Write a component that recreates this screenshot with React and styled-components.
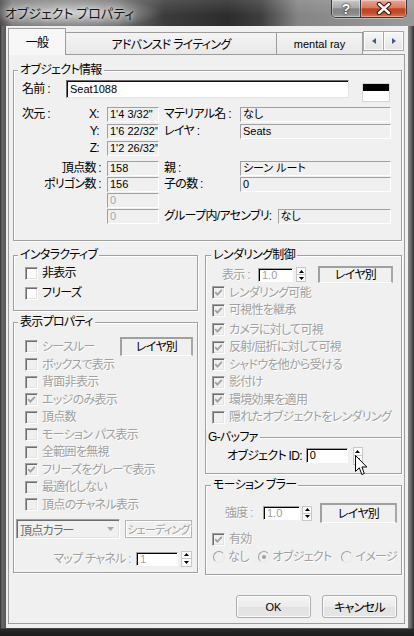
import React from 'react'
import styled, { createGlobalStyle, css } from 'styled-components'

const UI_FONT = `"Liberation Sans", "Noto Sans CJK JP", sans-serif`

const GlobalStyle = createGlobalStyle`
  html, body {
    margin: 0;
    padding: 0;
    background: #1e1e1e;
  }
  body {
    font-family: ${UI_FONT};
    font-size: 12px;
    font-feature-settings: "palt";
    letter-spacing: -0.7px;
    color: #000;
  }
  * { box-sizing: border-box; }
`

const Window = styled.div`
  position: relative;
  width: 414px;
  height: 636px;
  display: flex;
  flex-direction: column;
  overflow: hidden;
  background:
    linear-gradient(to top, #1b1b1b 0, #2a2a2a 7px, transparent 8px),
    linear-gradient(90deg, #2c2c2c 0, #6b6b6b 2px, #5a5a5a 5px, #6a6a6a 50%, #8a8a8a calc(100% - 6px), #6a6a6a calc(100% - 3px), #2a2a2a 100%);
`

const TitleBar = styled.div`
  flex: none;
  height: 26px;
  display: flex;
  align-items: flex-start;
  background:
    radial-gradient(ellipse 90px 16px at 72px 13px, rgba(235, 235, 235, 0.75), rgba(235, 235, 235, 0) 100%),
    linear-gradient(rgba(255, 255, 255, 0.12), rgba(255, 255, 255, 0) 60%),
    linear-gradient(90deg, #4a4a4a 0, #7d7d7d 3%, #727272 28%, #3b3b3b 40%, #2c2c2c 55%, #3e3e3e 63%, #858585 72%, #9a9a9a 100%);
`

const Title = styled.div`
  padding-left: 5px;
  line-height: 26px;
  font-family: "Noto Sans CJK JP", sans-serif;
  font-size: 13px;
  letter-spacing: 0;
  color: #151515;
  white-space: nowrap;
  text-shadow: 0 0 4px rgba(255, 255, 255, 0.9), 0 0 9px rgba(255, 255, 255, 0.6);
`

const Captions = styled.div`
  margin-left: auto;
  margin-right: 7px;
  display: flex;
  height: 18px;
  border: 1px solid #383838;
  border-top: none;
  border-radius: 0 0 5px 5px;
  overflow: hidden;
  box-shadow: 0 1px 0 rgba(255, 255, 255, 0.35);
`

const CaptionButton = styled.div`
  height: 17px;
  display: flex;
  align-items: center;
  justify-content: center;
  box-shadow: inset 0 0 0 1px rgba(255, 255, 255, 0.35);
  ${p => p.$close ? css`
    width: 45px;
    background: linear-gradient(#e8a898 0%, #d77a66 45%, #c5411f 52%, #c24a2b 75%, #dc7a52 100%);
  ` : css`
    width: 29px;
    border-right: 1px solid #383838;
    background: linear-gradient(#c9c9c9 0%, #a9a9a9 45%, #858585 52%, #8a8a8a 80%, #a6a6a6 100%);
    font-family: "Liberation Sans", sans-serif;
    font-weight: bold;
    font-size: 14px;
    letter-spacing: 0;
    color: #fff;
    text-shadow: 0 0 2px #222, 0 0 1px #222;
  `}
`

const Frame = styled.div`
  flex: 1;
  min-height: 0;
  display: flex;
  padding: 0 6px 8px 6px;
`

const Client = styled.div`
  flex: 1;
  display: flex;
  flex-direction: column;
  background: #f0f0f0;
  padding: 2px 3px 4px 2px;
`

const TabStrip = styled.div`
  flex: none;
  height: 26px;
  display: flex;
  align-items: flex-end;
`

const Tab = styled.div`
  flex: none;
  width: ${p => p.$w}px;
  display: flex;
  align-items: center;
  justify-content: center;
  white-space: nowrap;
  overflow: hidden;
  border: 1px solid #9c9c9c;
  border-bottom: none;
  ${p => p.$active ? css`
    position: relative;
    z-index: 1;
    height: 27px;
    margin-bottom: -1px;
    padding-bottom: 1px;
    background: #f7f7f7;
  ` : css`
    height: 22px;
    border-left: none;
    background: linear-gradient(#f4f4f4, #e8e8e8);
  `}
`

const Latin = styled.span`
  font-family: "Liberation Sans", sans-serif;
  font-size: 11px;
  letter-spacing: 0;
`

const TabScroll = styled.div`
  align-self: flex-start;
  margin-top: 3px;
  display: flex;
`

const ScrollButton = styled.div`
  width: 21px;
  height: 20px;
  display: flex;
  align-items: center;
  justify-content: center;
  border: 1px solid #a8a8a8;
  margin-left: ${p => p.$first ? 0 : -1}px;
  background: linear-gradient(#f7f7f7, #e4e4e4);
  box-shadow: inset 0 0 0 1px #fcfcfc;
`

const Panel = styled.div`
  flex: 1;
  display: flex;
  flex-direction: column;
  border: 1px solid #9c9c9c;
  background: #f0f0f0;
  padding: 15px 2px 0 4px;
`

const Group = styled.div`
  flex: none;
  display: flex;
  flex-direction: column;
  margin-top: ${p => p.$mt || 0}px;
  border: 1px solid #a0a0a0;
  box-shadow: inset 1px 1px 0 #fff, 1px 1px 0 #fff;
`

const Legend = styled.div`
  align-self: flex-start;
  height: 14px;
  margin: -8px 0 0 ${p => p.$ml}px;
  padding: 0 2px;
  background: #f0f0f0;
  line-height: 14px;
  white-space: nowrap;
`

const GroupBody = styled.div`
  display: flex;
  flex-direction: column;
  padding: ${p => p.$pad};
`

const NameRow = styled.div`
  display: flex;
  align-items: flex-start;
  height: 22px;
`

const NameLabel = styled.div`
  width: 44px;
  line-height: 18px;
  white-space: nowrap;
`

const NameInput = styled.div`
  width: 283px;
  height: 18px;
  background: #fff;
  border: 1px solid;
  border-color: #6a6a6a #e3e3e3 #e3e3e3 #6a6a6a;
  box-shadow: inset 1px 1px 0 #101010;
  padding-left: 3px;
  font-size: 11px;
  letter-spacing: 0;
  line-height: 16px;
`

const Swatch = styled.div`
  width: 28px;
  height: 19px;
  margin: 3px 0 0 13px;
  border: 1px solid #d6d6d6;
  background: linear-gradient(#000 0, #000 7px, #fff 7px);
`

const InfoRows = styled.div`
  display: flex;
  flex-direction: column;
  gap: ${p => p.$gap}px;
  margin-top: 5px;
`

const InfoRow = styled.div`
  display: grid;
  grid-template-columns: 85px 52px 81px 151px;
  height: 15px;
  align-items: center;
`

const RowLabel = styled.div`
  display: flex;
  justify-content: ${p => p.$split ? 'space-between' : 'flex-end'};
  padding-right: ${p => p.$pr}px;
  line-height: 15px;
  white-space: nowrap;
`

const SideLabel = styled.div`
  flex: none;
  padding-left: 5px;
  padding-right: ${p => p.$pr || 0}px;
  line-height: 15px;
  white-space: nowrap;
`

const Wide = styled.div`
  grid-column: 3 / 5;
  display: flex;
  align-items: center;
`

const ReadField = styled.div`
  flex: 1;
  height: 15px;
  background: #f0f0f0;
  border: 1px solid;
  border-color: #a0a0a0 #fff #fff #a0a0a0;
  padding-left: 2px;
  font-size: 11px;
  letter-spacing: 0;
  line-height: 13px;
  white-space: nowrap;
  overflow: hidden;
  color: ${p => p.$dim ? '#a8a8a8' : '#000'};
`

const Columns = styled.div`
  display: flex;
  gap: 7px;
  margin-top: 14px;
  align-items: flex-start;
`

const Column = styled.div`
  flex: none;
  width: ${p => p.$w}px;
  display: flex;
  flex-direction: column;
`

const Text = styled.span`
  white-space: nowrap;
  line-height: 14px;
  color: ${p => p.$off ? '#a0a0a0' : '#000'};
  text-shadow: ${p => p.$off ? '1px 1px 0 #fff' : 'none'};
`

const Row = styled.div`
  display: flex;
  align-items: center;
  height: ${p => p.$h}px;
  margin-top: ${p => p.$mt || 0}px;
  padding-left: ${p => p.$pl || 0}px;
  padding-right: ${p => p.$pr || 0}px;
  justify-content: ${p => p.$end ? 'flex-end' : 'flex-start'};
`

const CheckBox = styled.div`
  flex: none;
  width: 13px;
  height: 13px;
  margin-right: 4px;
  display: flex;
  align-items: center;
  justify-content: center;
  border: 1px solid;
  border-color: #a0a0a0 #fff #fff #a0a0a0;
  box-shadow: inset 1px 1px 0 #6d6d6d, inset -1px -1px 0 #e3e3e3;
  background: ${p => p.$off ? '#f0f0f0' : '#fff'};
`

const RadioDot = styled.div`
  flex: none;
  width: 12px;
  height: 12px;
  margin-right: 3px;
  border-radius: 50%;
  border: 1px solid #a0a0a0;
  border-right-color: #e8e8e8;
  border-bottom-color: #e8e8e8;
  background: #f0f0f0;
  display: flex;
  align-items: center;
  justify-content: center;
  &::after {
    content: '';
    width: 4px;
    height: 4px;
    border-radius: 50%;
    background: ${p => p.$on ? '#a0a0a0' : 'transparent'};
  }
`

const RadioOption = styled.div`
  flex: none;
  margin-right: 9px;
  display: flex;
  align-items: center;
`

const FieldLabel = styled.div`
  flex: none;
  width: ${p => p.$w ? `${p.$w}px` : 'auto'};
  margin-right: ${p => p.$mr || 0}px;
  white-space: nowrap;
  line-height: 14px;
  color: ${p => p.$off ? '#a0a0a0' : '#000'};
  text-shadow: ${p => p.$off ? '1px 1px 0 #fff' : 'none'};
`

const EditBox = styled.div`
  flex: none;
  width: ${p => p.$w}px;
  height: ${p => p.$h || 15}px;
  background: #fff;
  border: 1px solid;
  border-color: #a0a0a0 #fff #fff #a0a0a0;
  box-shadow: inset 1px 1px 0 #000;
  padding-left: 3px;
  font-size: 11px;
  letter-spacing: 0;
  line-height: ${p => (p.$h || 15) - 2}px;
  color: ${p => p.$off ? '#a0a0a0' : '#000'};
`

const SpinBox = styled.div`
  flex: none;
  width: ${p => p.$w || 10}px;
  height: ${p => p.$h || 15}px;
  margin-left: ${p => p.$ml || 2}px;
  display: flex;
  flex-direction: column;
  background: #fbfbfb;
  border: 1px solid #c8c8c8;
`

const SpinHalf = styled.div`
  flex: 1;
  display: flex;
  align-items: center;
  justify-content: center;
  & + & { border-top: 1px solid #c8c8c8; }
`

const LayerButton = styled.div`
  flex: none;
  width: ${p => p.$w}px;
  height: ${p => p.$h}px;
  margin-left: auto;
  margin-right: ${p => p.$mr || 0}px;
  display: flex;
  align-items: center;
  justify-content: center;
  background: #f0f0f0;
  border-style: solid;
  border-width: 2px 2px 1px 2px;
  border-color: #a0a0a0 #a8a8a8 #fff #a0a0a0;
  white-space: nowrap;
  line-height: 14px;
`

const Combo = styled.div`
  flex: none;
  width: 104px;
  height: 20px;
  margin-left: 2px;
  display: flex;
  align-items: center;
  justify-content: space-between;
  padding: 0 5px 0 3px;
  background: #f0f0f0;
  border: 1px solid;
  border-color: #a0a0a0 #fff #fff #a0a0a0;
  box-shadow: inset 1px 1px 0 #6d6d6d, inset -1px -1px 0 #e3e3e3;
  color: #6d6d6d;
  font-size: 12px;
`

const FlatButton = styled.div`
  flex: none;
  width: 67px;
  height: 18px;
  margin-left: 5px;
  display: flex;
  align-items: center;
  justify-content: center;
  border: 1px solid #b4b4b4;
  box-shadow: inset 1px 1px 0 #fff, inset -1px -1px 0 #fff;
  font-size: 11px;
  color: #a0a0a0;
  text-shadow: 1px 1px 0 #fff;
  white-space: nowrap;
  letter-spacing: -0.8px;
`

const Footer = styled.div`
  display: flex;
  justify-content: flex-end;
  gap: 11px;
  margin-top: 20px;
  padding-right: 5px;
`

const DialogButton = styled.div`
  width: 75px;
  height: 23px;
  display: flex;
  align-items: center;
  justify-content: center;
  border: 1px solid #acacac;
  border-radius: 3px;
  background: linear-gradient(#f4f4f4, #ececec 50%, #e2e2e2 51%, #e6e6e6);
  box-shadow: inset 0 0 0 1px #fbfbfb;
`

const Cursor = styled.svg`
  position: absolute;
  left: 355px;
  top: 455px;
  pointer-events: none;
`

function Check ({ checked, off, children, h = 17.5, mt, pl }) {
  return (
    <Row $h={h} $mt={mt} $pl={pl}>
      <CheckBox $off={off}>
        {checked && (
          <svg width="9" height="9" viewBox="0 0 9 9">
            <path d="M1.2 4.2 L3.4 6.6 L7.8 1.8" fill="none" stroke={off ? '#a0a0a0' : '#000'} strokeWidth="1.8" />
          </svg>
        )}
      </CheckBox>
      <Text $off={off}>{children}</Text>
    </Row>
  )
}

function Spinner ({ w, h, ml }) {
  return (
    <SpinBox $w={w} $h={h} $ml={ml}>
      <SpinHalf>
        <svg width="5" height="3" viewBox="0 0 5 3"><path d="M0 3 L2.5 0 L5 3 Z" fill="#000" /></svg>
      </SpinHalf>
      <SpinHalf>
        <svg width="5" height="3" viewBox="0 0 5 3"><path d="M0 0 L2.5 3 L5 0 Z" fill="#000" /></svg>
      </SpinHalf>
    </SpinBox>
  )
}

const displayItems = [
  ['ボックスで表示', false],
  ['背面非表示', false],
  ['エッジのみ表示', true],
  ['頂点数', false],
  ['モーション パス表示', false],
  ['全範囲を無視', false],
  ['フリーズをグレーで表示', true],
  ['最適化しない', false],
  ['頂点のチャネル表示', false]
]

const renderItemsA = [
  ['レンダリング可能', true],
  ['可視性を継承', true]
]

const renderItemsB = [
  ['カメラに対して可視', true],
  ['反射/屈折に対して可視', true],
  ['シャドウを他から受ける', true],
  ['影付け', true],
  ['環境効果を適用', true],
  ['隠れたオブジェクトをレンダリング', false]
]

export default function App () {
  return (
    <>
      <GlobalStyle />
      <Window>
        <TitleBar>
          <Title>オブジェクト プロパティ</Title>
          <Captions>
            <CaptionButton>?</CaptionButton>
            <CaptionButton $close>
              <svg width="16" height="13" viewBox="0 0 16 13">
                <path d="M3 2 L13 11 M13 2 L3 11" stroke="#3b1408" strokeWidth="4.4" strokeLinecap="round" />
                <path d="M3 2 L13 11 M13 2 L3 11" stroke="#fff" strokeWidth="2.4" strokeLinecap="round" />
              </svg>
            </CaptionButton>
          </Captions>
        </TitleBar>

        <Frame>
          <Client>
            <TabStrip>
              <Tab $active $w={58}>一般</Tab>
              <Tab $w={211}>アドバンスド ライティング</Tab>
              <Tab $w={86}><Latin>mental ray</Latin></Tab>
              <TabScroll>
                <ScrollButton $first>
                  <svg width="4" height="6" viewBox="0 0 4 6"><path d="M4 0 L0 3 L4 6 Z" fill="#3d5b8c" /></svg>
                </ScrollButton>
                <ScrollButton>
                  <svg width="4" height="6" viewBox="0 0 4 6"><path d="M0 0 L4 3 L0 6 Z" fill="#3d5b8c" /></svg>
                </ScrollButton>
              </TabScroll>
            </TabStrip>

            <Panel>
              <Group>
                <Legend $ml={4}>オブジェクト情報</Legend>
                <GroupBody $pad="3px 0 16px 8px">
                  <NameRow>
                    <NameLabel>名前 :</NameLabel>
                    <NameInput>Seat1088</NameInput>
                    <Swatch />
                  </NameRow>

                  <InfoRows $gap={2}>
                    <InfoRow>
                      <RowLabel $split $pr={8}><span>次元 :</span><span>X:</span></RowLabel>
                      <ReadField>1'4 3/32"</ReadField>
                      <SideLabel>マテリアル名 :</SideLabel>
                      <ReadField>なし</ReadField>
                    </InfoRow>
                    <InfoRow>
                      <RowLabel $pr={8}>Y:</RowLabel>
                      <ReadField>1'6 22/32"</ReadField>
                      <SideLabel>レイヤ :</SideLabel>
                      <ReadField>Seats</ReadField>
                    </InfoRow>
                    <InfoRow>
                      <RowLabel $pr={8}>Z:</RowLabel>
                      <ReadField>1'2 26/32"</ReadField>
                    </InfoRow>
                  </InfoRows>

                  <InfoRows $gap={1}>
                    <InfoRow>
                      <RowLabel $pr={6}>頂点数 :</RowLabel>
                      <ReadField>158</ReadField>
                      <SideLabel>親 :</SideLabel>
                      <ReadField>シーン ルート</ReadField>
                    </InfoRow>
                    <InfoRow>
                      <RowLabel $pr={6}>ポリゴン数 :</RowLabel>
                      <ReadField>156</ReadField>
                      <SideLabel>子の数 :</SideLabel>
                      <ReadField>0</ReadField>
                    </InfoRow>
                    <InfoRow>
                      <RowLabel $pr={6} />
                      <ReadField $dim>0</ReadField>
                    </InfoRow>
                    <InfoRow>
                      <RowLabel $pr={6} />
                      <ReadField $dim>0</ReadField>
                      <Wide>
                        <SideLabel $pr={6}>グループ内/アセンブリ:</SideLabel>
                        <ReadField>なし</ReadField>
                      </Wide>
                    </InfoRow>
                  </InfoRows>
                </GroupBody>
              </Group>

              <Columns>
                <Column $w={185}>
                  <Group>
                    <Legend $ml={4}>インタラクティブ</Legend>
                    <GroupBody $pad="2px 0 8px 11px">
                      <Check h={18}>非表示</Check>
                      <Check h={18} mt={2}>フリーズ</Check>
                    </GroupBody>
                  </Group>

                  <Group $mt={11}>
                    <Legend $ml={4}>表示プロパティ</Legend>
                    <GroupBody $pad="8px 0 5px 0">
                      <Row $h={19} $pl={11}>
                        <CheckBox $off />
                        <Text $off>シースルー</Text>
                        <LayerButton $w={73} $h={19} $mr={4}>レイヤ別</LayerButton>
                      </Row>
                      {displayItems.map(([label, on]) => (
                        <Check key={label} checked={on} off pl={11}>{label}</Check>
                      ))}
                      <Row $h={20} $mt={5.5}>
                        <Combo>
                          <span>頂点カラー</span>
                          <svg width="7" height="4" viewBox="0 0 7 4"><path d="M0 0 L7 0 L3.5 4 Z" fill="#a8a8a8" /></svg>
                        </Combo>
                        <FlatButton>シェーディング</FlatButton>
                      </Row>
                      <Row $h={17} $mt={11} $end $pr={5}>
                        <FieldLabel $off $mr={5}>マップ チャネル :</FieldLabel>
                        <EditBox $w={42} $h={14} $off>1</EditBox>
                        <Spinner w={11} h={16} ml={3} />
                      </Row>
                    </GroupBody>
                  </Group>
                </Column>

                <Column $w={197}>
                  <Group>
                    <Legend $ml={5}>レンダリング制御</Legend>
                    <GroupBody $pad="3px 0 11px 0">
                      <Row $h={19} $pl={16}>
                        <FieldLabel $off $w={36}>表示 :</FieldLabel>
                        <EditBox $w={35} $h={14} $off>1.0</EditBox>
                        <Spinner w={10} h={15} ml={3} />
                        <LayerButton $w={75} $h={17} $mr={8}>レイヤ別</LayerButton>
                      </Row>
                      {renderItemsA.map(([label, on]) => (
                        <Check key={label} checked={on} off pl={6}>{label}</Check>
                      ))}
                      <Check checked off pl={6} mt={2}>{renderItemsB[0][0]}</Check>
                      {renderItemsB.slice(1).map(([label, on]) => (
                        <Check key={label} checked={on} off pl={6}>{label}</Check>
                      ))}
                    </GroupBody>
                  </Group>

                  <Group $mt={-1}>
                    <Legend $ml={0}>G-バッファ</Legend>
                    <GroupBody $pad="2px 0 8px 0">
                      <Row $h={19} $pl={21}>
                        <FieldLabel $mr={4}>オブジェクト ID:</FieldLabel>
                        <EditBox $w={42} $h={15}>0</EditBox>
                        <Spinner w={10} h={18} ml={5} />
                      </Row>
                    </GroupBody>
                  </Group>

                  <Group $mt={11}>
                    <Legend $ml={5}>モーション ブラー</Legend>
                    <GroupBody $pad="11px 0 8px 0">
                      <Row $h={20} $pl={19}>
                        <FieldLabel $off $w={38}>強度 :</FieldLabel>
                        <EditBox $w={37} $h={14} $off>1.0</EditBox>
                        <Spinner w={10} h={15} ml={2} />
                        <LayerButton $w={77} $h={20} $mr={4}>レイヤ別</LayerButton>
                      </Row>
                      <Check checked off pl={6} mt={7.5}>有効</Check>
                      <Row $h={18} $pl={7}>
                        <RadioOption><RadioDot /><Text $off>なし</Text></RadioOption>
                        <RadioOption><RadioDot $on /><Text $off>オブジェクト</Text></RadioOption>
                        <RadioOption><RadioDot /><Text $off>イメージ</Text></RadioOption>
                      </Row>
                    </GroupBody>
                  </Group>
                </Column>
              </Columns>

              <Footer>
                <DialogButton><Latin>OK</Latin></DialogButton>
                <DialogButton>キャンセル</DialogButton>
              </Footer>
            </Panel>
          </Client>
        </Frame>

        <Cursor width="13" height="21" viewBox="0 0 13 21">
          <path d="M0.5 0.5 L0.5 16.5 L4.3 12.8 L6.8 19.5 L9.3 18.5 L6.9 12 L11.8 12 Z" fill="#fff" stroke="#000" strokeWidth="1" strokeLinejoin="miter" />
        </Cursor>
      </Window>
    </>
  )
}
